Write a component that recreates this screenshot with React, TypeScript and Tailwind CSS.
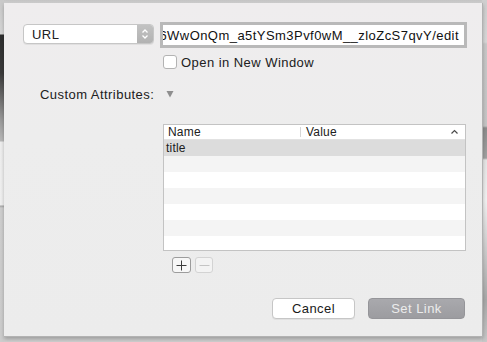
import React from 'react';

const font = "font-['Helvetica_Neue','Liberation_Sans',Arial,sans-serif]";

const Chevrons = () => (
    <svg width="8" height="12" viewBox="0 0 8 12" fill="none">
        <path d="M1.5 4.5 L4 2 L6.5 4.5" stroke="#fff" strokeWidth="1.3" />
        <path d="M1.5 7.5 L4 10 L6.5 7.5" stroke="#fff" strokeWidth="1.3" />
    </svg>
);

const App: React.FC = () => {
    const rows = ['title', '', '', '', '', '', ''];

    return (
        <div
            className={`relative w-[487px] h-[342px] overflow-hidden bg-[linear-gradient(to_bottom,#c4c4c4_0px,#d2d2d2_3px,#d4d4d4_40px,#cfcfcf_100%)] pt-[3px] pl-[4px] ${font}`}
        >
            {/* desktop behind the sheet */}
            <div className="absolute left-0 top-0 w-[4px] h-[342px] bg-[linear-gradient(to_bottom,#c9c9c9_0px,#d6d6d6_34px,#2f2f2f_35px,#3b3b3b_73px,#9a9a9a_120px,#b9b9b9_141px,#efefef_142px,#f1f1f1_205px,#a8a8a8_206px,#cfcfcf_208px,#cdcdcd_100%)]" />
            <div className="absolute right-0 top-0 w-[5px] h-[342px] bg-[linear-gradient(to_bottom,#cfcfcf_0px,#d8d8d8_42px,#c9c9c9_44px,#c6c6c6_126px,#8d8d8d_128px,#a2a2a2_158px,#e6e6e6_160px,#f2f2f2_200px,#a9a9a9_300px,#c9c9c9_100%)]" />

            <div className="relative w-[479px] h-[334px] bg-[linear-gradient(to_bottom,#efedee,#ededed_40%,#ececec)] border-r border-b border-[#b2b2b2] shadow-[0_2px_4px_rgba(0,0,0,0.25)] pl-[19px] pt-[19px] text-[13px] tracking-[0.45px] text-[#202020] leading-none">
                {/* row 1: popup + url field */}
                <div className="flex items-start">
                    <div className="mt-[2px] w-[131px] h-[20px] flex rounded-[4px] border border-[#c6c6c6] bg-white shadow-[0_1px_0_rgba(0,0,0,0.06)] overflow-hidden">
                        <div className="flex-1 flex items-center pl-[8px]">URL</div>
                        <div className="w-[16px] flex items-center justify-center bg-[linear-gradient(to_bottom,#c2c2c2,#b2b2b2)]">
                            <Chevrons />
                        </div>
                    </div>
                    <div className="ml-[6px] w-[307px] h-[26px] border-[3px] border-[#b9b9b9] bg-white flex items-center justify-end overflow-hidden pr-[5px]">
                        <span className="whitespace-nowrap text-[#111]">6WwOnQm_a5tYSm3Pvf0wM__zloZcS7qvY/edit</span>
                    </div>
                </div>

                {/* row 2: checkbox */}
                <div className="flex items-center mt-[7px] ml-[140px] h-[14px]">
                    <div className="w-[14px] h-[14px] rounded-[3px] border border-[#b3b3b3] bg-white" />
                    <span className="ml-[4px]">Open in New Window</span>
                </div>

                {/* row 3: custom attributes */}
                <div className="flex items-center mt-[17px] h-[16px]">
                    <span className="ml-[17px] w-[126px]">Custom Attributes:</span>
                    <svg width="8" height="8" viewBox="0 0 8 8">
                        <polygon points="0.5,1 7.5,1 4,7.5" fill="#8e8e8e" />
                    </svg>
                </div>

                {/* row 4: table */}
                <div className="mt-[22px] ml-[140px] w-[303px] h-[127px] border border-[#c3c3c3] bg-white overflow-hidden tracking-[0.2px]">
                    <div className="h-[15px] flex items-center border-b border-[#e2e2e2] bg-white text-[12px]">
                        <div className="w-[137px] pl-[4px] border-r border-[#d6d6d6] h-[10px] flex items-center">Name</div>
                        <div className="flex-1 pl-[5px]">Value</div>
                        <svg width="9" height="6" viewBox="0 0 9 6" className="mr-[6px]">
                            <path d="M1.5 4.5 L4.5 1.5 L7.5 4.5" stroke="#4a4a4a" strokeWidth="1.2" fill="none" />
                        </svg>
                    </div>
                    {rows.map((r, i) => (
                        <div
                            key={i}
                            className={`h-[16px] flex items-center pl-[2px] text-[12px] ${i === 0 ? 'bg-[#dcdcdc]' : i % 2 === 1 ? 'bg-[#f4f4f4]' : 'bg-white'}`}
                        >
                            {r}
                        </div>
                    ))}
                </div>

                {/* row 5: +/- */}
                <div className="flex mt-[6px] ml-[149px] gap-[4px]">
                    <div className="w-[19px] h-[16px] rounded-[3px] border border-[#9c9c9c] bg-[#f7f7f7] flex items-center justify-center">
                        <svg width="11" height="11" viewBox="0 0 11 11">
                            <path d="M5.5 0.5 V10.5 M0.5 5.5 H10.5" stroke="#3c3c3c" strokeWidth="1" />
                        </svg>
                    </div>
                    <div className="w-[18px] h-[16px] rounded-[3px] border border-[#d3d3d3] bg-[#f3f3f3] flex items-center justify-center">
                        <svg width="11" height="11" viewBox="0 0 11 11">
                            <path d="M0.5 5.5 H10.5" stroke="#c4c4c4" strokeWidth="1" />
                        </svg>
                    </div>
                </div>

                {/* row 6: buttons */}
                <div className="flex mt-[25px] ml-[249px] gap-[13px]">
                    <button className="w-[83px] h-[21px] rounded-[4px] border border-[#c6c6c6] bg-white text-[13px] text-[#1a1a1a] shadow-[0_1px_0_rgba(0,0,0,0.05)]">
                        Cancel
                    </button>
                    <button className="w-[97px] h-[21px] rounded-[4px] bg-[linear-gradient(to_bottom,#a9a9ad,#9c9ca0)] border border-[#959599] text-[13px] text-[#ececec]">
                        Set Link
                    </button>
                </div>
            </div>
        </div>
    );
};

export default App;
